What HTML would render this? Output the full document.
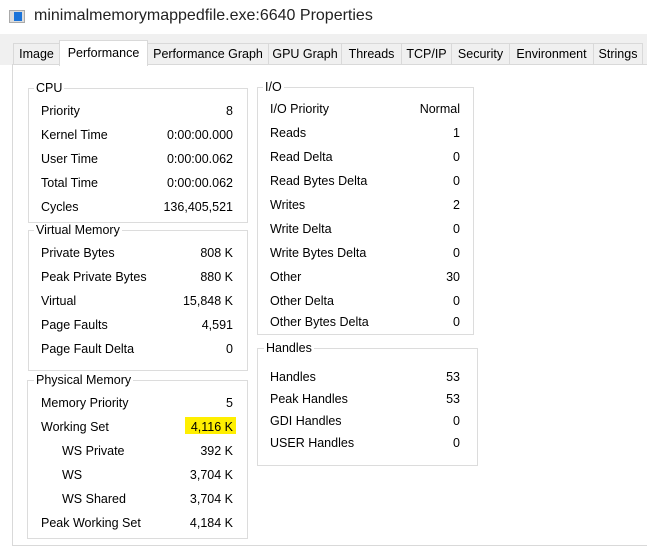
<!DOCTYPE html>
<html><head><style>
body{margin:0;width:647px;height:541px;background:#fff;position:relative;overflow:hidden;font-family:"Liberation Sans",sans-serif;font-size:12.5px;color:#000}
.a{position:absolute;white-space:nowrap}
.r{position:absolute;text-align:right;white-space:nowrap}
.box{position:absolute;border:1px solid #dcdcdc}
.lg{position:absolute;background:#fff;padding:0 2px;white-space:nowrap}
.tab{position:absolute;top:43px;height:21px;background:#f0f0f0;border:1px solid #d9d9d9;border-bottom:none;line-height:21px;text-align:center;box-sizing:border-box}
</style></head><body>
<div class="a" style="left:0;top:0;width:647px;height:34px;background:#fff"></div>
<div class="a" style="left:9px;top:10px;width:16px;height:13px;background:#dcdcdc;border:1px solid #aaa;box-sizing:border-box"></div>
<div class="a" style="left:14px;top:12px;width:8px;height:9px;background:#1a73d9"></div>
<div class="a" style="left:34px;top:7px;font-size:16px;color:#222">minimalmemorymappedfile.exe:6640 Properties</div>
<div class="a" style="left:0;top:34px;width:647px;height:31px;background:#f0f0f0"></div>
<div class="a" style="left:12px;top:64px;width:640px;height:480px;background:#fff;border:1px solid #d9d9d9"></div>
<div class="tab" style="left:13px;width:47px">Image</div>
<div class="tab" style="left:59px;top:40px;height:26px;width:89px;background:#fff;line-height:24px;z-index:2">Performance</div>
<div class="tab" style="left:147px;width:122px">Performance Graph</div>
<div class="tab" style="left:268px;width:74px">GPU Graph</div>
<div class="tab" style="left:341px;width:61px">Threads</div>
<div class="tab" style="left:401px;width:51px">TCP/IP</div>
<div class="tab" style="left:451px;width:59px">Security</div>
<div class="tab" style="left:509px;width:85px">Environment</div>
<div class="tab" style="left:593px;width:50px">Strings</div>

<div class="box" style="left:28px;top:88px;width:218px;height:133px"></div>
<div class="lg" style="left:34px;top:81px">CPU</div>
<div class="box" style="left:28px;top:230px;width:218px;height:139px"></div>
<div class="lg" style="left:34px;top:223px">Virtual Memory</div>
<div class="box" style="left:27px;top:380px;width:219px;height:157px"></div>
<div class="lg" style="left:34px;top:373px">Physical Memory</div>
<div class="box" style="left:257px;top:87px;width:215px;height:246px"></div>
<div class="lg" style="left:263px;top:80px">I/O</div>
<div class="box" style="left:257px;top:348px;width:219px;height:116px"></div>
<div class="lg" style="left:264px;top:341px">Handles</div>

<div class="a" style="left:185px;top:417px;width:51px;height:17px;background:#ffef00"></div>

<div class="a" style="left:41px;top:99px;line-height:24px">Priority<br>Kernel Time<br>User Time<br>Total Time<br>Cycles</div>
<div class="r" style="left:100px;width:133px;top:99px;line-height:24px">8<br>0:00:00.000<br>0:00:00.062<br>0:00:00.062<br>136,405,521</div>
<div class="a" style="left:41px;top:241px;line-height:24px">Private Bytes<br>Peak Private Bytes<br>Virtual<br>Page Faults<br>Page Fault Delta</div>
<div class="r" style="left:100px;width:133px;top:241px;line-height:24px">808 K<br>880 K<br>15,848 K<br>4,591<br>0</div>
<div class="a" style="left:41px;top:391px;line-height:24px">Memory Priority<br>Working Set<br><span style="padding-left:21px">WS Private</span><br><span style="padding-left:21px">WS</span><br><span style="padding-left:21px">WS Shared</span><br>Peak Working Set</div>
<div class="r" style="left:100px;width:133px;top:391px;line-height:24px">5<br>4,116 K<br>392 K<br>3,704 K<br>3,704 K<br>4,184 K</div>
<div class="a" style="left:270px;top:97px;line-height:24px">I/O Priority<br>Reads<br>Read Delta<br>Read Bytes Delta<br>Writes<br>Write Delta<br>Write Bytes Delta<br>Other<br>Other Delta</div>
<div class="r" style="left:340px;width:120px;top:97px;line-height:24px">Normal<br>1<br>0<br>0<br>2<br>0<br>0<br>30<br>0</div>
<div class="a" style="left:270px;top:315px">Other Bytes Delta</div>
<div class="r" style="left:340px;width:120px;top:315px">0</div>
<div class="a" style="left:270px;top:366px;line-height:22px">Handles<br>Peak Handles<br>GDI Handles<br>USER Handles</div>
<div class="r" style="left:340px;width:120px;top:366px;line-height:22px">53<br>53<br>0<br>0</div>
</body></html>
